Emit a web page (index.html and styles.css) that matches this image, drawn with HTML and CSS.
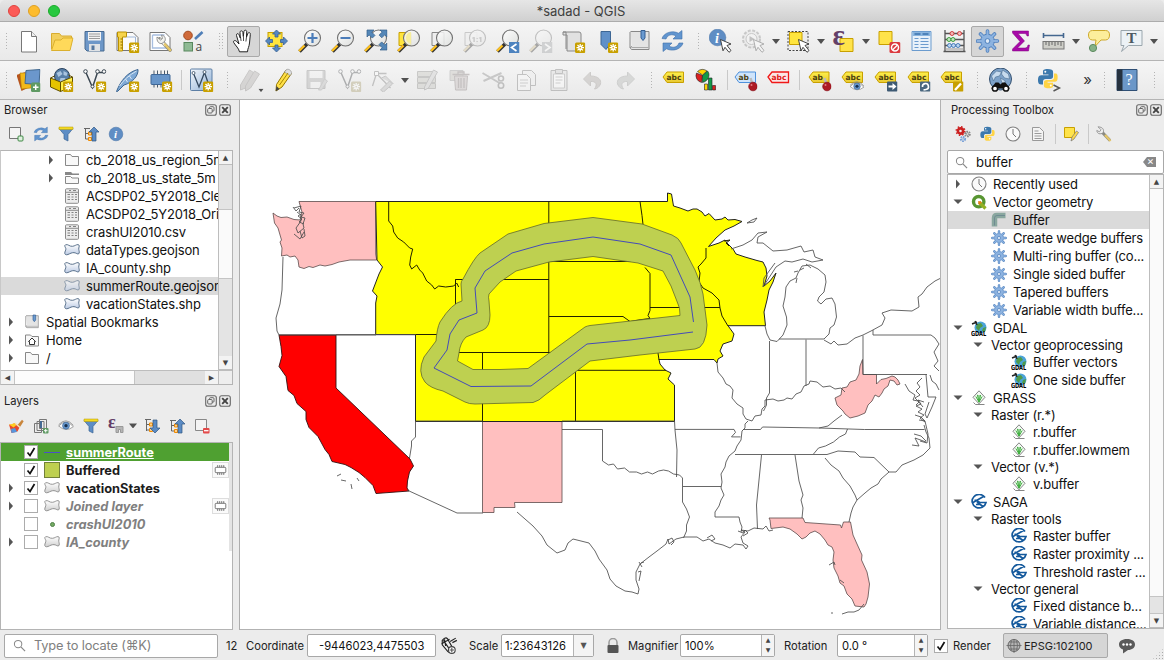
FILE: index.html
```html
<!DOCTYPE html>
<html lang="en">
<head>
<meta charset="utf-8">
<title>*sadad - QGIS</title>
<link rel="stylesheet" href="styles.css">
</head>
<body>
<svg class="defs" width="0" height="0">
<defs>
<linearGradient id="g-lens" x1="0" y1="0" x2="1" y2="1"><stop offset="0" stop-color="#fff"/><stop offset="1" stop-color="#dcdedc"/></linearGradient>
<linearGradient id="g-poly" x1="0" y1="0" x2="0" y2="1"><stop offset="0" stop-color="#fff"/><stop offset="1" stop-color="#bccbe4"/></linearGradient>
<linearGradient id="g-gray" x1="0" y1="0" x2="0" y2="1"><stop offset="0" stop-color="#fff"/><stop offset="1" stop-color="#cfcfcf"/></linearGradient>
<linearGradient id="g-blue" x1="0" y1="0" x2="1" y2="1"><stop offset="0" stop-color="#f4f8fc"/><stop offset="1" stop-color="#8fb0d6"/></linearGradient>
<linearGradient id="g-yel" x1="0" y1="0" x2="0" y2="1"><stop offset="0" stop-color="#fff04a"/><stop offset="1" stop-color="#e8c832"/></linearGradient>
</defs>
</svg>
<svg class="icons" width="0" height="0">
<symbol id="star" viewBox="0 0 24 24"><rect x="13.500" y="13.500" width="10.500" height="10.500" rx="1.500" fill="#c8a000"/><path d="M18.700 15v7.500M15 18.700h7.500M16 16l5.400 5.400M21.400 16L16 21.400" stroke="#fff" stroke-width="1.300"/><circle cx="18.700" cy="18.700" r=".8" fill="#c8a000"/></symbol>
<symbol id="new" viewBox="0 0 24 24"><path d="M5 2.500h10l5 5v15.500H5z" fill="#fff" stroke="#777"/><path d="M15 2.500v5h5" fill="#eee" stroke="#777"/></symbol>
<symbol id="open" viewBox="0 0 24 24"><path d="M2 20V4.500h8l2 2.500h10v4" fill="#f2cf5e" stroke="#d8ac30"/><path d="M2 21.500L5.500 11h6l2-2H23.500L20.500 21.500z" fill="#ffd95a" stroke="#dbb02e"/></symbol>
<symbol id="save" viewBox="0 0 24 24"><path d="M2.500 2.500h19v19.500h-17l-2-2z" fill="#6d97c8" stroke="#486a90"/><path d="M5.500 3h13v8.500h-13z" fill="#f4f4f4"/><path d="M6.500 5h11M6.500 7.300h11M6.500 9.500h11" stroke="#9a9a9a"/><path d="M6.500 15h11v7h-11z" fill="#dfe2e5"/><path d="M9 16.500h3v4.500H9z" fill="#54779f"/></symbol>
<symbol id="layout" viewBox="0 0 24 24"><path d="M1.500 3.500h16l5 5v13h-21z" fill="#fafafa" stroke="#777"/><path d="M2 3h9v5H7v14H3V8H2z" fill="#f6d44b" stroke="#b99000"/><path d="M5 10h2m-2 3h2m-2 3h2m-2 3h2" stroke="#8a6b00"/><path d="M11 8h9v9" fill="none" stroke="#9fb7d8"/><use href="#star"/></symbol>
<symbol id="wrench" viewBox="0 0 24 24"><path d="M1.500 3.500h15l5 5v13h-20z" fill="#fff" stroke="#777"/><path d="M4 6h12M4 6v13h15" fill="none" stroke="#a8bedf" stroke-width="1.300"/><path d="M11 10l10.500 11" stroke="#8a8a80" stroke-width="3.800" stroke-linecap="round"/><path d="M11 10l6 6.500" stroke="#f3f3ef" stroke-width="2.400"/><path d="M16.500 15.500l5 5.500" stroke="#e5c668" stroke-width="2.600" stroke-linecap="round"/><path d="M8.500 8l3.500 3 2-1.500-1-3.500c3 .5 4.500 3 3.500 6l-3 2.500c-3 .5-5.500-2-5-6.500z" fill="#f3f3ef" stroke="#808080" stroke-width=".8"/></symbol>
<symbol id="style" viewBox="0 0 24 24"><circle cx="6.500" cy="6.500" r="4.300" fill="#cf6a3a" stroke="#a34a20"/><path d="M13.500 10L21 3" stroke="#4f7fb8" stroke-width="2.600"/><rect x="2.500" y="13.500" width="8.500" height="8.500" fill="#8fba94" stroke="#59885e"/><text x="14" y="22" class="glyph-a">a</text></symbol>
<symbol id="hand" viewBox="0 0 24 24"><path d="M8 22.800c-1-4-3.500-5.500-5.800-9.300-.9-1.800 1.300-2.600 2.800-1.200L7.500 15 5 6.500c-.5-2 1.800-2.500 2.500-.8L8.800 9l-.3-5.500c0-2.200 2.600-2.200 2.900 0l.4 4 .6-5c.5-2 3-1.500 2.800.4L15 8l1.300-3.500c.9-1.700 2.900-.8 2.500 1L18 14c-.3 4-1.800 5-2 8.800z" fill="#fff" stroke="#222" stroke-width="1"/><path d="M9 8l.6 4M12 7.500v4.500M15 8l-.6 4.500" stroke="#222" stroke-width=".8"/></symbol>
<symbol id="panfull" viewBox="0 0 24 24"><rect x="3.500" y="3.500" width="14" height="14" fill="#ffe53e" stroke="#c8a000"/><path d="M12 1l4 4h-2.500v3h-3V5H8zM12 23l4-4h-2.500v-3h-3v3H8zM1 12l4-4v2.500h3v3H5V16zM23 12l-4-4v2.500h-3v3h3V16z" fill="#5487c4" stroke="#385f90" stroke-width=".8"/></symbol>
<symbol id="lens" viewBox="0 0 24 24"><path d="M2 22.500L9.500 15" stroke="#333" stroke-width="3.500"/><path d="M1.500 22L7 16.500" stroke="#ffc21f" stroke-width="2.300"/><circle cx="15" cy="9" r="8" fill="url(#g-lens)" fill-opacity=".85" stroke="#717171" stroke-width="1.100"/></symbol>
<symbol id="zin" viewBox="0 0 24 24"><use href="#lens"/><path d="M15 4v10M10 9h10" stroke="#4c7db9" stroke-width="2.200"/></symbol>
<symbol id="zout" viewBox="0 0 24 24"><use href="#lens"/><path d="M10 9h10" stroke="#4c7db9" stroke-width="2.200"/></symbol>
<symbol id="zfull" viewBox="0 0 24 24"><use href="#lens"/><path d="M3.500 1h7L8.300 3.200l3.200 3.200-2.700 2.700-3.200-3.200L3.500 8zM23.500 1v7l-2.200-2.200-3 3-2.700-2.700 3-3L16.500 1zM23.500 21h-7l2.200-2.200-3.200-3.200 2.700-2.700 3.200 3.200 2.100-2.100z" fill="#5487b8" stroke="#345f8a" stroke-width=".7"/></symbol>
<symbol id="zsel" viewBox="0 0 24 24"><path d="M2.500 3.500h12v13h-12z" fill="#ffe53e" stroke="#c8a000"/><use href="#lens"/><path d="M14.500 3a6 6 0 0 0-5 6c0 3 2 5 5 6z" fill="#f6ee9c"/></symbol>
<symbol id="zlayer" viewBox="0 0 24 24"><path d="M2.500 3.500h12v13h-12z" fill="#eee" stroke="#888"/><use href="#lens"/></symbol>
<symbol id="znative" viewBox="0 0 24 24"><path d="M2.500 3.500h12v13h-12z" fill="#eee" stroke="#888"/><use href="#lens"/><text x="9" y="12.500" class="glyph-n">1:1</text></symbol>
<symbol id="zprev" viewBox="0 0 24 24"><use href="#lens"/><path d="M13.500 13h10.500v11H13.500z" fill="#4d83bf"/><path d="M21 15l-5 3.500 5 3.500" fill="none" stroke="#fff" stroke-width="1.700"/></symbol>
<symbol id="znext" viewBox="0 0 24 24"><use href="#lens"/><path d="M13.500 13h10.500v11H13.500z" fill="#9ba5ae"/><path d="M16.500 15l5 3.500-5 3.500" fill="none" stroke="#fff" stroke-width="1.700"/></symbol>
<symbol id="newmap" viewBox="0 0 24 24"><path d="M1.500 3h16a2 2 0 0 1 2 2v17H5.500V6h-4z" fill="#e1e1e1" stroke="#888"/><path d="M1.500 3h3v17" fill="none" stroke="#888"/><use href="#star"/></symbol>
<symbol id="bookmark" viewBox="0 0 24 24"><path d="M6.500 2.500h9.500v12l-4.500 6-5-5z" fill="#6090c8" stroke="#3d6694"/><use href="#star"/></symbol>
<symbol id="bookmarks" viewBox="0 0 24 24"><path d="M3 2.500h18.500v18H4.500c-2 0-2-3 0-3M2.500 3v16" fill="#e4e4e4" stroke="#888"/><path d="M4 18.500h17" stroke="#aaa"/><path d="M13.500 1.500h4V9l-2 2.500-2-2.500z" fill="#6a9ad0" stroke="#345f94"/></symbol>
<symbol id="refresh" viewBox="0 0 24 24"><path d="M1.500 9.500A11 9 0 0 1 18 4.200L21.500 1.500v8.500h-9l3-3C11 4.500 7 6 5.500 10z" fill="#6195cf" stroke="#3e6fa9" stroke-width=".6"/><path d="M22.500 14A11 9 0 0 1 6 19.800l-3.500 2.700V14h9l-3 3c4.500 2.500 8.500 1 10-3z" fill="#6195cf" stroke="#3e6fa9" stroke-width=".6"/></symbol>
<symbol id="cursor" viewBox="0 0 24 24"><path d="M12 10.500l10.500 4.500-4 1.500 4 5-2 1.800-4-5-2 3.500z" fill="#fff" stroke="#333" stroke-width=".9"/></symbol>
<symbol id="identify" viewBox="0 0 24 24"><circle cx="9" cy="8.500" r="8.300" fill="#5f8dc4" stroke="#4a76a9" stroke-width=".6"/><text x="6.500" y="13.500" class="glyph-i">i</text><use href="#cursor"/></symbol>
<symbol id="action" viewBox="0 0 24 24"><circle cx="10" cy="10" r="8.500" fill="#e4e4e4" stroke="#888" stroke-width="2" stroke-dasharray="3 1.500"/><circle cx="10" cy="10" r="5.500" fill="#f6f6f6" stroke="#888"/><path d="M8 7l5 3-5 3z" fill="#777"/><use href="#cursor"/></symbol>
<symbol id="select" viewBox="0 0 24 24"><path d="M1.500 2.500h20v19h-20z" fill="#ececec" stroke="#444" stroke-dasharray="2 1.500"/><path d="M3 3.500h12.500v12H3z" fill="#ffe53e" stroke="#c8a000"/><use href="#cursor"/></symbol>
<symbol id="selexpr" viewBox="0 0 24 24"><path d="M8.500 9.500h13v13h-13z" fill="#ffe34a" stroke="#c8a000"/><text x="1" y="16" class="glyph-e">ε</text></symbol>
<symbol id="deselect" viewBox="0 0 24 24"><path d="M2.500 2.500h13v13h-13z" fill="#ffe34a" stroke="#c8a000"/><rect x="13" y="13" width="11" height="11" rx="1.500" fill="#db3a3f"/><circle cx="18.500" cy="18.500" r="3.500" fill="none" stroke="#fff" stroke-width="1.500"/><path d="M16 21l5-5" stroke="#fff" stroke-width="1.300"/></symbol>
<symbol id="table" viewBox="0 0 24 24"><path d="M2.500 2.500h19v19h-19z" fill="#e8f1fa" stroke="#6b9bce"/><path d="M3 3h18v4H3z" fill="#8ab5df"/><path d="M5 5h6M13 5h6" stroke="#3d73ae" stroke-width="1.300"/><path d="M5 9.500h4m2 0h8M5 12.500h4m2 0h8M5 15.500h4m2 0h8M5 18.500h4m2 0h8" stroke="#6b9bce" stroke-width="1.100"/></symbol>
<symbol id="abacus" viewBox="0 0 24 24"><path d="M2.500 1v21.500M21.500 1v21.500M1 22.500h22M2 4.500h20M2 10.500h20M2 16.500h20" stroke="#555" stroke-width="1.300"/><path d="M2 20h20" stroke="#999"/><g stroke-width=".9"><g fill="#f4b8b8" stroke="#c33"><circle cx="9.500" cy="4.500" r="2"/><circle cx="17" cy="4.500" r="2"/></g><g fill="#bfe6bf" stroke="#393"><circle cx="6.500" cy="10.500" r="2"/><circle cx="10.500" cy="10.500" r="2"/></g><g fill="#bcd5f0" stroke="#3b75b5"><circle cx="7" cy="16.500" r="2"/><circle cx="11" cy="16.500" r="2"/><circle cx="15.500" cy="16.500" r="2"/></g></g></symbol>
<symbol id="gear" viewBox="0 0 24 24"><path d="M12 2v20M2 12h20M5 5l14 14M19 5L5 19" stroke="#4d7fbd" stroke-width="3.600" stroke-linecap="round"/><circle cx="12" cy="12" r="6.800" fill="#8db3e0" stroke="#4d7fbd"/><path d="M12 2v20M2 12h20M5 5l14 14M19 5L5 19" stroke="#8db3e0" stroke-width="2" stroke-linecap="round"/><circle cx="12" cy="12" r="2.400" fill="#dce8f6" stroke="#4d7fbd"/></symbol>
<symbol id="sigma" viewBox="0 0 24 24"><path d="M4 2h16v5h-1.500c-.5-2-1.200-2.500-3-2.500H9.500L16 12l-7 7h7.500c1.800 0 2.300-.7 3-3h1.500l-1 6H4v-2l7.500-7.500L4 4z" fill="#a80aa8" stroke="#7d007d" stroke-width=".5"/></symbol>
<symbol id="measure" viewBox="0 0 24 24"><path d="M2 6.500h20M2 4v5M22 4v5" stroke="#44678f" stroke-width="1.600"/><rect x="1.500" y="12.500" width="21" height="7.500" fill="#cfcfc9" stroke="#777"/><path d="M4.500 13v3M7.500 13v4M10.500 13v3M13.500 13v4M16.500 13v3M19.500 13v4" stroke="#666"/></symbol>
<symbol id="tip" viewBox="0 0 24 24"><path d="M6 1.500h13c3 0 4 2 4 4.500s-1 5-4 5h-4.500l-6 6.500 1-6.500H6c-3 0-4-2.500-4-5s1-4.500 4-4.500z" fill="#fcee9b" stroke="#cda92c"/><circle cx="6.500" cy="19" r="3.600" fill="#86b287" stroke="#5d8b60"/></symbol>
<symbol id="annot" viewBox="0 0 24 24"><path d="M1.500 1.500h21v15H9l-7 6 2.500-6h-3z" fill="#ecf2f6" stroke="#9aa6ad"/><text x="7" y="14" class="glyph-t">T</text></symbol>
<symbol id="dsm" viewBox="0 0 24 24"><path d="M0 7l9-3 4 15-8 4z" fill="#b6541d"/><path d="M3.500 5h10l1 15L5 21z" fill="#f3b81a" stroke="#b37d00" stroke-width=".6"/><path d="M9.500 2.500l14-1-1 15-14-1z" fill="#6b97cc" stroke="#41688f"/><rect x="14.500" y="14.500" width="9.500" height="9.500" rx="1.500" fill="#5f9a63"/><path d="M19.200 16.500v5.500M16.500 19.200H22" stroke="#fff" stroke-width="1.500"/></symbol>
<symbol id="gpkg" viewBox="0 0 24 24"><circle cx="12.500" cy="8" r="7.500" fill="#587fa8" stroke="#29425e"/><path d="M7 5l4-2 2 3-4 3zM14 3l4 2-1 3-3-1zM11 10h5l-2 4h-4z" fill="#a9c4df"/><path d="M1 10l10 4v9.500L1 19z" fill="#e6c400" stroke="#604f00"/><path d="M11 14l12-5v9.500l-12 5z" fill="#fff04a" stroke="#604f00"/><path d="M1 10l4-2M23 9l-4-2" stroke="#604f00"/><use href="#star"/></symbol>
<symbol id="shp" viewBox="0 0 24 24"><path d="M3 3.500l7 16 5-15h7" fill="none" stroke="#3b4752" stroke-width="1.500"/><g fill="#fff" stroke="#3b4752"><circle cx="3" cy="3.500" r="1.800"/><circle cx="15" cy="3.500" r="1.800"/><circle cx="21.500" cy="3.500" r="1.800"/><circle cx="10" cy="18.500" r="1.500"/></g><use href="#star"/></symbol>
<symbol id="feather" viewBox="0 0 24 24"><path d="M1 23.500C5 13 12 4 22.500 1.500c.5 6-5 13-14 15.500L2 23.500z" fill="#7ea9d6" stroke="#3c6590"/><path d="M4 18C8 12 14 7 21 3M10 11l2 3m2-6l2 3" stroke="#d7e6f4" fill="none"/><use href="#star"/></symbol>
<symbol id="memory" viewBox="0 0 24 24"><path d="M5.500 2.500v17M9 2.500v17M12.500 2.500v17M16 2.500v17M19 2.500v17" stroke="#4a5a6a"/><rect x="2.500" y="6.500" width="19" height="10" rx="1" fill="#6795c9" stroke="#3f6796"/><use href="#star"/></symbol>
<symbol id="virtual" viewBox="0 0 24 24"><rect x="1" y="1" width="21.500" height="21.500" rx="1" fill="url(#g-blue)" stroke="#5d7fa5"/><path d="M4 5.500L9.500 19 15 4.500 19 16" fill="none" stroke="#354a60" stroke-width="1.300"/><g fill="#fff" stroke="#354a60" stroke-width=".8"><circle cx="4" cy="5" r="1.500"/><circle cx="15" cy="4" r="1.500"/></g><use href="#star"/></symbol>
<symbol id="pencil" viewBox="0 0 24 24"><path d="M5 16.500L14.500 2l5.500 3.500L10.500 19 4.500 23z" fill="#ffe047" stroke="#937500"/><path d="M14.500 2c2-2 6 .5 5.500 3.500l-1.300 2L13 4z" fill="#ddd" stroke="#999" stroke-width=".7"/><path d="M8 17L16.500 5" stroke="#a98900"/><path d="M5 18l-.8 5.300L8 21z" fill="#444"/></symbol>
<symbol id="edits" viewBox="0 0 24 24"><g fill="#b5aba5" stroke="#8e857f"><path d="M2 17L11 2l4 2.500L7 20l-5 2z"/><path d="M7 18L16 3l5 3L12 20l-5 3z"/></g></symbol>
<symbol id="saveedit" viewBox="0 0 24 24"><path d="M2.500 2.500h18v18h-18z" fill="#aaa" stroke="#888"/><path d="M5 3h13v7H5zM6 14h10v6H6z" fill="#f2f2f2"/><path d="M14 22l6-11 3 2-6 9z" fill="#bbb" stroke="#999"/></symbol>
<symbol id="vertex" viewBox="0 0 24 24"><path d="M2 18L6 5.500h10M6 5.500L20 20" fill="none" stroke="#777" stroke-width="1.300"/><path d="M4 3.500h4v4H4z" fill="#fff" stroke="#777"/><path d="M10 22l9-9 3 3-9 8zM11 10l4-2 8 8" fill="#bbb" stroke="#888"/></symbol>
<symbol id="multi" viewBox="0 0 24 24"><path d="M2 3.500h18v5H2zM2 9.500h18v5H2zM2 15.500h18v5H2z" fill="#c4c4ae" stroke="#8a8a7c"/><path d="M9 19L18 2l4 2-9 16-4 2z" fill="#ccc" stroke="#888"/></symbol>
<symbol id="trash" viewBox="0 0 24 24"><path d="M1.500 2.500h13v10h-13z" fill="#c8c0a8" stroke="#999"/><path d="M6 8h13l-1 14H7z" fill="#d2b5b5" stroke="#947575"/><path d="M4 6.500h17M9.500 6V4h6v2M10 10v10M12.500 10v10M15.500 10v10" stroke="#947575" stroke-width="1.300" fill="none"/></symbol>
<symbol id="cut" viewBox="0 0 24 24"><path d="M1 5l17 10M2 13L20 5" stroke="#888" stroke-width="2"/><g fill="none" stroke="#777" stroke-width="1.600"><circle cx="19.500" cy="10.500" r="2.500"/><circle cx="19.500" cy="17.500" r="2.700"/></g></symbol>
<symbol id="copy" viewBox="0 0 24 24"><path d="M8 2.500h9l4 4v11H8z" fill="#eee" stroke="#777"/><path d="M3 6.500h9l4 4v12H3z" fill="#f8f8f8" stroke="#777"/><path d="M5.500 12h8M5.500 15h8M5.500 18h6" stroke="#999"/></symbol>
<symbol id="paste" viewBox="0 0 24 24"><path d="M3.500 2.500h16v20h-16z" fill="#ddd" stroke="#777"/><path d="M6 6h11v14H6z" fill="#fff" stroke="#999"/><path d="M8 1.500h7v4H8z" fill="#ccc" stroke="#777"/><path d="M8 9h7M8 12h7M8 15h5" stroke="#999"/></symbol>
<symbol id="undo" viewBox="0 0 24 24"><path d="M3 11l7-7v4c8 0 11 4 10 8-1 3-4 5-6 5 3-4 2-8-4-7.500v4.500z" fill="#b6a798" stroke="#9e8f82"/></symbol>
<symbol id="redo" viewBox="0 0 24 24"><path d="M21 11l-7-7v4C6 8 3 12 4 16c1 3 4 5 6 5-3-4-2-8 4-7.500v4.500z" fill="#aeb4ae" stroke="#959b95"/></symbol>
<symbol id="lab" viewBox="0 0 24 24"><path d="M1.500 9L5.500 4H22v10.500H5.500z" fill="url(#g-yel)" stroke="#c8a000"/><text x="5" y="12.300" class="glyph-l">abc</text></symbol>
<symbol id="diagram" viewBox="0 0 24 24"><path d="M8 7.500L2 5a7 7 0 0 0 5 9.500z" fill="#dc2020" stroke="#222" stroke-width=".6"/><path d="M8 7L3 3.500a7 7 0 0 1 9.500-.5z" fill="#ffd400" stroke="#222" stroke-width=".6"/><path d="M8 7.500l5-4.500c3 3 1.500 10-5 11.500z" fill="#129a48" stroke="#222" stroke-width=".6"/><path d="M10 16h3v6h-3z" fill="#ffd400" stroke="#222" stroke-width=".6"/><path d="M14 10h3.500v12H14z" fill="#129a48" stroke="#222" stroke-width=".6"/><path d="M18 17.500h3V22h-3z" fill="#dc2020" stroke="#222" stroke-width=".6"/></symbol>
<symbol id="labpin" viewBox="0 0 24 24"><path d="M1.500 9L5.500 4H22v10.500H5.500z" fill="#cfe4fb" stroke="#4e91dc"/><text x="5" y="12.300" class="glyph-l">ab</text><use href="#pin"/></symbol>
<symbol id="pin" viewBox="0 0 24 24"><path d="M17 10l2.500 8" stroke="#bbb" stroke-width="2.500"/><circle cx="19.500" cy="18.500" r="4.300" fill="#ad1a24" stroke="#8a0f18" stroke-width=".7"/><circle cx="18" cy="17" r="1" fill="#e37a80"/></symbol>
<symbol id="labred" viewBox="0 0 24 24"><path d="M1.500 9L5.500 4H22v10.500H5.500z" fill="#fbe6e6" stroke="#f01818" stroke-width="1.300"/><text x="5" y="12.300" class="glyph-l red">abc</text></symbol>
<symbol id="lab1" viewBox="0 0 24 24"><path d="M1.500 9L5.500 4H21.500v10.500H5.500z" fill="url(#g-yel)" stroke="#c8a000"/><text x="5" y="12.300" class="glyph-l">ab</text><use href="#pin"/></symbol>
<symbol id="eye" viewBox="0 0 24 24"><path d="M1 12q11-12 22 1-11 9-22-1z" fill="#fff" stroke="#777"/><circle cx="12" cy="11.500" r="5.200" fill="#6a9ad0" stroke="#3c6796"/><circle cx="12" cy="11.500" r="2.500" fill="#17304e"/><path d="M1 10Q12-2 23 11" fill="none" stroke="#8a8a8a" stroke-width="1.200"/></symbol>
<symbol id="lab2" viewBox="0 0 24 24"><use href="#lab"/><use href="#eye" x="9" y="11" width="15" height="15"/></symbol>
<symbol id="lab3" viewBox="0 0 24 24"><use href="#lab"/><rect x="13.500" y="13.500" width="10.500" height="10" rx="1" fill="#3e5a74"/><path d="M15 17.500h4V15l4 3.500-4 3.500v-2.500h-4z" fill="#fff"/></symbol>
<symbol id="lab4" viewBox="0 0 24 24"><use href="#lab"/><rect x="13.500" y="13.500" width="10.500" height="10" rx="1" fill="#4a677f"/><path d="M16 19a3 3 0 1 1 3.500 2.500L17 22" fill="none" stroke="#fff" stroke-width="1.600"/></symbol>
<symbol id="lab5" viewBox="0 0 24 24"><use href="#lab"/><rect x="13.500" y="13.500" width="10.500" height="10" rx="1" fill="#c8a000"/><path d="M15.500 22l6-6.500" stroke="#fff" stroke-width="2.300"/></symbol>
<symbol id="osm" viewBox="0 0 24 24"><circle cx="12" cy="11" r="11" fill="#7da2c9" stroke="#34506f"/><path d="M3 8l5-5 5 1-2 4-4 1-2 4zM14 2l6 4 1 5-5-1-3-4zM12 10l5 3-3 4z" fill="#c7dbee" stroke="#4a6b8d" stroke-width=".6"/><path d="M2.500 20.500L7 14.500h3l2 2 2-2h3l4.500 6" fill="#111"/><g fill="#fff" stroke="#111" stroke-width="1.500"><circle cx="6.500" cy="20.500" r="2.600"/><circle cx="17.500" cy="20.500" r="2.600"/></g></symbol>
<symbol id="py" viewBox="0 0 24 24"><path d="M11 1c-4 0-5 1-5 3v3h6v1H4c-2 0-3.500 1.500-3.500 5s1 5 3.500 5h2v-3c0-2 1-3 3-3h5c2 0 3-1 3-3V4c0-2-2-3-6-3z" fill="#3c79ad"/><path d="M12 22c4 0 5-1 5-3v-3h-6v-1h8c2 0 3-1.500 3-5s-1-4-3-4h-1v4c0 2-1 3-3 3h-5c-2 0-3 1-3 3v3c0 2 1 3 5 3z" fill="#ffd445"/><circle cx="8.500" cy="4" r="1.100" fill="#fff"/><circle cx="14.500" cy="19" r="1.100" fill="#fff"/></symbol>
<symbol id="pyc" viewBox="0 0 24 24"><use href="#py" width="22" height="22"/><path d="M16 17l6 3-6 3" fill="none" stroke="#555" stroke-width="1.400"/></symbol>
<symbol id="help" viewBox="0 0 24 24"><path d="M2.500 1.500h20v21h-20z" fill="#6b97c8" stroke="#2f4f75"/><path d="M2.500 1.500H8v21H2.500z" fill="#26323f"/><text x="11" y="17" class="glyph-q">?</text></symbol>
<symbol id="expand" viewBox="0 0 16 16"><path d="M6 3.500v9l4-4.500z" fill="#555"/></symbol>
<symbol id="open-tri" viewBox="0 0 16 16"><path d="M3.500 5.500h9L8 10z" fill="#555"/></symbol>
<symbol id="folder" viewBox="0 0 16 16"><path d="M1.500 13.500v-11h5l1.500 2h6.500v9z" fill="#f8f8f8" stroke="#888"/></symbol>
<symbol id="folderopen" viewBox="0 0 16 16"><path d="M1 2h6l1.500 1.500H15V5H1z" fill="#888"/><path d="M1.500 13.500v-7h5L8 8h6.500v5.500z" fill="#f8f8f8" stroke="#888"/></symbol>
<symbol id="csv" viewBox="0 0 16 16"><rect x="1.500" y=".8" width="13" height="14.500" rx="1" fill="#ececec" stroke="#8c8c8c"/><path d="M2 4.300h12" stroke="#8c8c8c"/><path d="M3.500 6.500h2.500m1.500 0h2m1.500 0h2M3.500 9h2.500m1.500 0h2m1.500 0h2M3.500 11.500h2.500m1.500 0h2m1.500 0h2M5 2.500h2m2 0h3" stroke="#777" stroke-width=".9"/></symbol>
<symbol id="poly" viewBox="0 0 16 16"><path d="M1.500 2.800C4 1.800 5.500 4.700 8.500 4.300 11 4 12 2.600 14 2.600c1.800.2 1.200 2 .8 3.400-.3 1.700.8 3.500.4 5-.5 1.700-2 .8-3.700 0-2-.8-4-.2-6 .8-2 1.200-4.300 1.500-4.700-.3C.5 9.500 2.200 8.300 1.800 6.500 1.300 5 0 3.500 1.500 2.800z" fill="url(#g-poly)" stroke="#4a6380" stroke-width=".9"/></symbol>
<symbol id="polyg" viewBox="0 0 16 16"><path d="M1.500 2.800C4 1.800 5.500 4.700 8.500 4.300 11 4 12 2.600 14 2.600c1.800.2 1.200 2 .8 3.400-.3 1.700.8 3.500.4 5-.5 1.700-2 .8-3.700 0-2-.8-4-.2-6 .8-2 1.200-4.300 1.500-4.700-.3C.5 9.500 2.200 8.300 1.800 6.500 1.300 5 0 3.500 1.500 2.800z" fill="url(#g-gray)" stroke="#888" stroke-width=".9"/></symbol>
<symbol id="home" viewBox="0 0 16 16"><path d="M1.500 14v-11h5l1.500 1.500h6.500V14z" fill="#f8f8f8" stroke="#888"/><path d="M4.500 9.500L8 6l3.500 3.500H10.500v3h-5v-3z" fill="#fff" stroke="#333"/></symbol>
<symbol id="float" viewBox="0 0 12 12"><rect x=".7" y=".7" width="10.600" height="10.600" rx="2" fill="none" stroke="#666" stroke-width="1.100"/><rect x="4.500" y="2.700" width="4.500" height="4.500" rx="1" fill="none" stroke="#666"/><rect x="2.700" y="4.500" width="4.500" height="4.500" rx="1" fill="#ececec" stroke="#666"/></symbol>
<symbol id="close" viewBox="0 0 12 12"><rect x=".7" y=".7" width="10.600" height="10.600" rx="2" fill="none" stroke="#666" stroke-width="1.100"/><path d="M3.200 3.200l5.600 5.600M8.800 3.200L3.200 8.800" stroke="#444" stroke-width="1.900"/></symbol>
<symbol id="addlayer" viewBox="0 0 16 16"><path d="M1.500 1.500h11v11h-11z" fill="#f4f4f4" stroke="#777"/><rect x="10" y="10" width="5" height="5" rx="1" fill="#dff0df" stroke="#3f8a45"/></symbol>
<symbol id="remlayer" viewBox="0 0 16 16"><path d="M1.500 1.500h11v11h-11z" fill="#f4f4f4" stroke="#888"/><rect x="9" y="10" width="6.500" height="5.500" rx="1" fill="#e34a4a"/><path d="M10 12.700h4.500" stroke="#fff" stroke-width="1.300"/></symbol>
<symbol id="funnel" viewBox="0 0 16 16"><path d="M1 2.500h14l-5 6V15l-4-2V8.500z" fill="#5d8dc5" stroke="#3d6797" stroke-width=".7"/><path d="M1 1h14v2.500H1z" fill="#f4d922" stroke="#b49a00" stroke-width=".5"/></symbol>
<symbol id="collapse" viewBox="0 0 16 16"><path d="M1 2.500h6M2.500 3v10M2.500 7.500h3M2.500 13h3" stroke="#666"/><path d="M5.500 6h3v3h-3zM5.500 11.500h3v3h-3z" fill="#ffd08a" stroke="#f08a00"/><path d="M11 1l5 5h-3v9H9V6H6z" fill="#5b8bc4" stroke="#2f5683" stroke-width=".7"/></symbol>
<symbol id="expandall" viewBox="0 0 16 16"><path d="M1 1.500h6M2.500 2v11M2.500 6.500h3M2.500 12h3" stroke="#666"/><path d="M5.500 5h3v3h-3zM5.500 10.500h3v3h-3z" fill="#ffd08a" stroke="#f08a00"/><path d="M11 15l5-5h-3V2H9v8H6z" fill="#5b8bc4" stroke="#2f5683" stroke-width=".7"/></symbol>
<symbol id="info" viewBox="0 0 16 16"><circle cx="8" cy="8" r="6.800" fill="#5f8dc4" stroke="#4a76a9" stroke-width=".6"/><text x="6" y="12" class="glyph-s">i</text></symbol>
<symbol id="brush" viewBox="0 0 16 16"><path d="M9.500 7L14 1.800l1.700 1.400L12 9z" fill="#c9863c"/><path d="M1 6.500l2.500.5 3-2 5 4.500-2 4-6 1.500z" fill="#e8492c"/><path d="M1 6.500l3-.5 2.500-1 2 2-3 2.500z" fill="#ffcc20"/><path d="M3 11l4-1 2 4-5.500 1z" fill="#5696dc"/><path d="M7 5l5 4.500" stroke="#f3ddb5" stroke-width="1.500"/></symbol>
<symbol id="group" viewBox="0 0 16 16"><path d="M1.500 5.500h7v9h-7zM4 3.500h7v9H4zM6.500 1.500h7v9h-7z" fill="#eee" stroke="#777"/><path d="M8 3v7" stroke="#456a94" stroke-width="2"/><rect x="10" y="10" width="5.500" height="5.500" rx="1" fill="#5f9a63"/><path d="M12.700 11v3.500M11 12.700h3.500" stroke="#fff"/></symbol>
<symbol id="epsf" viewBox="0 0 16 16"><text x="0" y="9.500" class="glyph-es">ε</text><path d="M8 8.500h7v6h-2.500v-3h-2v3H8z" fill="#b5b5b5" stroke="#999"/></symbol>
<symbol id="chip" viewBox="0 0 16 14"><path d="M4.500 1v12M7 1v12M9.500 1v12M12 1v12" stroke="#666" stroke-width="1.100"/><rect x="1.500" y="3.700" width="13" height="6.600" rx="1" fill="#fff" stroke="#777" stroke-width="1.200"/></symbol>
<symbol id="check" viewBox="0 0 12 12"><path d="M2.500 6.500L5 9.500l4.500-7.500" fill="none" stroke="#111" stroke-width="1.700"/></symbol>
<symbol id="mag" viewBox="0 0 14 14"><circle cx="5.500" cy="5.500" r="4" fill="none" stroke="#888" stroke-width="1.100"/><path d="M8.500 8.500l4.500 4.500" stroke="#888" stroke-width="1.300"/></symbol>
<symbol id="clock" viewBox="0 0 16 16"><circle cx="8" cy="8" r="7" fill="#fafafa" stroke="#808080" stroke-width="1.100"/><path d="M8 3v5l3 3" fill="none" stroke="#777"/></symbol>
<symbol id="q" viewBox="0 0 16 16"><circle cx="7.700" cy="7.700" r="5.200" fill="none" stroke="#589632" stroke-width="3.400"/><path d="M8 8l6.500 6.500" stroke="#93b023" stroke-width="3.200"/><path d="M7 7l4 1-3 3z" fill="#ee7913"/></symbol>
<symbol id="buf" viewBox="0 0 16 16"><path d="M3.500 14.500V6q0-2.500 2.500-2.500h8.500" fill="none" stroke="#8aa79f" stroke-width="5.500"/><path d="M3.500 13.500V6q0-2.500 2.500-2.500h8" fill="none" stroke="#6f8c92" stroke-width="1"/></symbol>
<symbol id="gdal" viewBox="0 0 16 16"><circle cx="9.500" cy="7.500" r="6" fill="#4ba3d8"/><path d="M6 4l4-1 2 3-3 2-1 3-3-3zM12 8l3-1-1 5-3-1z" fill="#4f9a4a"/><path d="M1 4l5-2M4 1l2 4" stroke="#222" stroke-width="1.400"/><text x="0" y="15.500" class="glyph-g" textLength="15" lengthAdjust="spacingAndGlyphs">GDAL</text></symbol>
<symbol id="grass" viewBox="0 0 16 16"><path d="M8 .8l6 6.500-6 6.500-6-6.500z" fill="#f4faf4" stroke="#777" stroke-width=".9"/><path d="M8 12.500V5M8 12L4.800 6.500M8 12l3.200-5.500M8 12L6.400 4.800M8 12l1.600-7" stroke="#3fae3f"/><path d="M2.500 12.500l2 2h9" stroke="#777" fill="none" stroke-width=".9"/></symbol>
<symbol id="saga" viewBox="0 0 16 16"><path d="M14 3.500A7 6.700 0 1 0 15 8.500H8M2 8.500l10.500-6M6 8l6.500 5M5 10.500h4M3.500 6L8.500 8" fill="none" stroke="#14599c" stroke-width="1.700"/></symbol>
<symbol id="gears" viewBox="0 0 16 16"><g fill="none" stroke-width="2.600"><circle cx="5.500" cy="5" r="2.600" stroke="#cc2020" stroke-width="2.600"/><circle cx="5.500" cy="5" r="4.300" stroke="#cc2020" stroke-width="1.500" stroke-dasharray="1.500 1.880"/><circle cx="12.500" cy="8" r="2" stroke="#888" stroke-dasharray="1.300 .6"/><circle cx="8" cy="13" r="1.800" stroke="#7ba3d8" stroke-dasharray="1.300 .6"/></g></symbol>
<symbol id="doc" viewBox="0 0 16 16"><path d="M2.500 1.500h7l4 4v9h-11z" fill="#f4f4f4" stroke="#999"/><path d="M4.500 5h4m-4 2.500h7m-7 2.500h7m-7 2.500h7" stroke="#999"/></symbol>
<symbol id="sqedit" viewBox="0 0 16 16"><path d="M1.500 1.500h10v10h-10z" fill="#ffe34a" stroke="#c8a000"/><path d="M8 15l1-4 4.500-6 2 1.500L11 13z" fill="#ffd94a" stroke="#777" stroke-width=".7"/></symbol>
<symbol id="spanner" viewBox="0 0 16 16"><path d="M5 5l9 9.500" stroke="#8a8a80" stroke-width="3"/><path d="M9 9l5.500 6" stroke="#e5c668" stroke-width="2.200"/><path d="M2 .8l3 3-1.500 2L.8 4.500C1 8 4.500 8.500 7 7 8.500 4 7 1 2 .8z" fill="#eee" stroke="#888" stroke-width=".8"/></symbol>
<symbol id="mouse" viewBox="0 0 16 16"><path d="M2 3q4-5 6 1l4 7q-2 4-5 2L2 7z" fill="#eee" stroke="#222"/><path d="M3 3l7 10M1.500 6l7-4M9 4l5-3M11 5l4-2M4 2l1 6" stroke="#222"/><circle cx="10.500" cy="11.500" r="3" fill="#fff" stroke="#444"/><path d="M10.500 9.500v4M8.500 11.500h4" stroke="#555"/></symbol>
<symbol id="lock" viewBox="0 0 16 16"><path d="M4 8V4.500a4 4 0 0 1 8 0V8" fill="none" stroke="#999" stroke-width="1.500"/><rect x="2.500" y="7" width="11" height="8" rx="1" fill="#555"/></symbol>
<symbol id="crs" viewBox="0 0 16 16"><circle cx="8" cy="7.500" r="6" fill="#b4b4b4" stroke="#666"/><path d="M.5 7.500h15M8 1v14M3.500 4h9M3.500 11h9M5.500 2.500q-2 5 0 10M10.500 2.500q2 5 0 10" fill="none" stroke="#666" stroke-width=".8"/></symbol>
<symbol id="chat" viewBox="0 0 18 16"><path d="M9 1c5 0 8 2.300 8 5.500S14 12 10 12l-5 3.500V11.500C2.500 10.500 1 9 1 6.500 1 3.300 4 1 9 1z" fill="#5a5a5a"/><circle cx="5.500" cy="6.500" r="1.200" fill="#fff"/><circle cx="9" cy="6.500" r="1.200" fill="#fff"/><circle cx="12.500" cy="6.500" r="1.200" fill="#fff"/></symbol>
</svg>

<header class="titlebar"><div class="lights"><i class="light red-l"></i><i class="light yellow-l"></i><i class="light green-l"></i></div><h1>*sadad - QGIS</h1></header>

<nav class="toolbar">
<i class="handle first"></i>
<svg class="tool"><use href="#new"/></svg><svg class="tool"><use href="#open"/></svg><svg class="tool"><use href="#save"/></svg><svg class="tool"><use href="#layout"/></svg><svg class="tool"><use href="#wrench"/></svg><svg class="tool"><use href="#style"/></svg>
<i class="handle wide"></i>
<span class="pressed"><svg class="tool"><use href="#hand"/></svg></span><svg class="tool"><use href="#panfull"/></svg><svg class="tool"><use href="#zin"/></svg><svg class="tool"><use href="#zout"/></svg><svg class="tool"><use href="#zfull"/></svg><svg class="tool"><use href="#zsel"/></svg><svg class="tool"><use href="#zlayer"/></svg><svg class="tool off"><use href="#znative"/></svg><svg class="tool"><use href="#zprev"/></svg><svg class="tool off"><use href="#znext"/></svg><svg class="tool"><use href="#newmap"/></svg><svg class="tool"><use href="#bookmark"/></svg><svg class="tool"><use href="#bookmarks"/></svg><svg class="tool"><use href="#refresh"/></svg>
<i class="handle narrow"></i>
<svg class="tool"><use href="#identify"/></svg><svg class="tool off"><use href="#action"/></svg><i class="drop"></i><svg class="tool"><use href="#select"/></svg><i class="drop"></i><svg class="tool"><use href="#selexpr"/></svg><i class="drop"></i><svg class="tool"><use href="#deselect"/></svg><svg class="tool"><use href="#table"/></svg><svg class="tool"><use href="#abacus"/></svg><span class="pressed"><svg class="tool"><use href="#gear"/></svg></span><svg class="tool"><use href="#sigma"/></svg><svg class="tool"><use href="#measure"/></svg><i class="drop"></i><svg class="tool"><use href="#tip"/></svg><svg class="tool"><use href="#annot"/></svg><i class="drop"></i>
</nav>
<nav class="toolbar">
<i class="handle first"></i>
<svg class="tool"><use href="#dsm"/></svg><svg class="tool"><use href="#gpkg"/></svg><svg class="tool"><use href="#shp"/></svg><svg class="tool"><use href="#feather"/></svg><svg class="tool"><use href="#memory"/></svg><i class="sep"></i><svg class="tool"><use href="#virtual"/></svg>
<i class="handle"></i>
<span class="cell"><svg class="tool off"><use href="#edits"/></svg><i class="drop corner"></i></span><svg class="tool"><use href="#pencil"/></svg><svg class="tool off"><use href="#saveedit"/></svg><svg class="tool off"><use href="#shp"/></svg><svg class="tool off"><use href="#vertex"/></svg><i class="drop"></i><svg class="tool off"><use href="#multi"/></svg><svg class="tool off"><use href="#trash"/></svg><svg class="tool off"><use href="#cut"/></svg><svg class="tool off"><use href="#copy"/></svg><svg class="tool off"><use href="#paste"/></svg><svg class="tool off"><use href="#undo"/></svg><svg class="tool off"><use href="#redo"/></svg>
<i class="handle narrow"></i>
<svg class="tool"><use href="#lab"/></svg><svg class="tool"><use href="#diagram"/></svg><i class="sep thin"></i><svg class="tool"><use href="#labpin"/></svg><svg class="tool"><use href="#labred"/></svg><i class="sep"></i><svg class="tool"><use href="#lab1"/></svg><svg class="tool"><use href="#lab2"/></svg><svg class="tool"><use href="#lab3"/></svg><svg class="tool"><use href="#lab4"/></svg><svg class="tool"><use href="#lab5"/></svg>
<i class="handle"></i><svg class="tool"><use href="#osm"/></svg><i class="handle"></i><svg class="tool"><use href="#pyc"/></svg><span class="more">»</span><i class="handle narrow"></i><svg class="tool"><use href="#help"/></svg><i class="handle last"></i>
</nav>

<main class="main">
<aside class="left">
<section class="dock browser">
<header class="dock-title"><h2>Browser</h2><svg><use href="#float"/></svg><svg><use href="#close"/></svg></header>
<div class="dock-tools"><svg><use href="#addlayer"/></svg><svg><use href="#refresh"/></svg><svg><use href="#funnel"/></svg><svg><use href="#collapse"/></svg><svg><use href="#info"/></svg></div>
<div class="browser-view">
<ul class="tree">
<li class="deep"><svg class="arrow"><use href="#expand"/></svg><svg class="ico"><use href="#folder"/></svg>cb_2018_us_region_5m</li>
<li class="deep"><svg class="arrow"><use href="#expand"/></svg><svg class="ico"><use href="#folderopen"/></svg>cb_2018_us_state_5m</li>
<li class="deep"><i class="arrow"></i><svg class="ico"><use href="#csv"/></svg>ACSDP02_5Y2018_Clean</li>
<li class="deep"><i class="arrow"></i><svg class="ico"><use href="#csv"/></svg>ACSDP02_5Y2018_Original</li>
<li class="deep"><i class="arrow"></i><svg class="ico"><use href="#csv"/></svg>crashUI2010.csv</li>
<li class="deep"><i class="arrow"></i><svg class="ico"><use href="#poly"/></svg>dataTypes.geojson</li>
<li class="deep"><i class="arrow"></i><svg class="ico"><use href="#poly"/></svg>IA_county.shp</li>
<li class="deep picked"><i class="arrow"></i><svg class="ico tint"><use href="#poly"/></svg>summerRoute.geojson</li>
<li class="deep"><i class="arrow"></i><svg class="ico"><use href="#poly"/></svg>vacationStates.shp</li>
<li><svg class="arrow"><use href="#expand"/></svg><svg class="ico"><use href="#bookmarks"/></svg>Spatial Bookmarks</li>
<li><svg class="arrow"><use href="#expand"/></svg><svg class="ico"><use href="#home"/></svg>Home</li>
<li><svg class="arrow"><use href="#expand"/></svg><svg class="ico"><use href="#folder"/></svg>/</li>
<li><i class="arrow"></i><svg class="ico"><use href="#folderopen"/></svg></li>
</ul>
<div class="vbar"><b>▲</b><i class="v-thumb"></i><b>▼</b></div>
<div class="hbar"><b>◀</b><i class="h-thumb"></i><b>▶</b></div>
<div class="bar-corner"></div>
</div>
</section>
<section class="dock layers">
<header class="dock-title"><h2>Layers</h2><svg><use href="#float"/></svg><svg><use href="#close"/></svg></header>
<div class="dock-tools"><svg><use href="#brush"/></svg><svg><use href="#group"/></svg><svg><use href="#eye"/></svg><svg><use href="#funnel"/></svg><svg><use href="#epsf"/></svg><i class="drop"></i><svg><use href="#expandall"/></svg><svg><use href="#collapse"/></svg><svg><use href="#remlayer"/></svg></div>
<ul class="layer-list">
<li class="active"><i class="arrow"></i><span class="box"><svg><use href="#check"/></svg></span><i class="sym"><i class="line-sym"></i></i><span class="name">summerRoute</span></li>
<li><i class="arrow"></i><span class="box"><svg><use href="#check"/></svg></span><i class="sym fill-sym"></i><span class="name">Buffered</span><svg class="chip"><use href="#chip"/></svg></li>
<li><svg class="arrow"><use href="#expand"/></svg><span class="box"><svg><use href="#check"/></svg></span><svg class="sym"><use href="#polyg"/></svg><span class="name">vacationStates</span></li>
<li class="hidden-layer"><svg class="arrow"><use href="#expand"/></svg><span class="box"></span><svg class="sym"><use href="#polyg"/></svg><span class="name">Joined layer</span><svg class="chip"><use href="#chip"/></svg></li>
<li class="hidden-layer"><i class="arrow"></i><span class="box"></span><i class="sym"><i class="dot-sym"></i></i><span class="name">crashUI2010</span></li>
<li class="hidden-layer"><svg class="arrow"><use href="#expand"/></svg><span class="box"></span><svg class="sym"><use href="#polyg"/></svg><span class="name">IA_county</span></li>
</ul>
</section>
</aside>

<svg class="map" viewBox="240 100 700 529">
<g class="pink">
<path d="M299 201.500H375.700V254l1 6H350L339 262 332 264.500 325 266 320 265 313 267.500 309 266.500 304 268.500 299 267 298 260 295 256 290 257 287 255 281.500 256 282 248 280 242 281.500 240 278 228 274.500 223 273 213 277 216 281 217.500 287 217 294 219.500 300 220 302 212z"/>
<path d="M482.500 421H562V502.500H514.500l.5 5H494V512.500H482.500z"/>
<path d="M862.500 359.500L863 374.500H876.500V384L881 379.500 886 378.500 892 376 895 377 898 380 900 384 897 385 894 381 890 380 888 386 884 389 882 393 879 397 875 395 872 401 868 405 865 413 858 416 850 418 845 414 843 411 837 405 835 398 841 395 842 388 847 387 850 382 856 380 859 374 860 366z"/>
<path d="M769 518h34l2 4.500L840.500 525l1 3 2-6H850.500L853 535 857 544 862 555 861.500 560 867 572 869.500 584 868 597 866 604 864 607 855 606 852 599 847 594 844 586 840 583 838 576 834 568 833 560 834 552 832 547 828 545 825 540 820 534 815 531 810 533 806 537 802 539 797 534 790 529 783 527 771 528.500 770 520z"/>
</g>
<path class="red-state" d="M279 335h57v53l74 71 3.500 7-4 6-2 9-.5 7 2 3-33 2.500-3-8-8-8-6-5-8-5-6-3-13-3-3-7-4-5-7-13-9-9-3-8v-8l-9-8-3-8-6-5-2-14-7-10 3-11-1-9z"/>
<path class="yellow-state" d="M375.700 201.500H667.500V193L671.500 194 673.500 206 680 208 688 211 693 209 697 209 702 212 705 216 709 213.500 715 220 722 219 725 217 728 220 735 219.500 742 221.500 734 226 725 230 716 238 708.500 246.500 719 243 725 240 727 243 733 249 736 254 745 257 757 260.500 763 262 766 268 767 276 764 286 770 281 776 273 773 282 769 290 767 300 764 312 765.500 325.700H728L734 334 732 341 723 344 720 351 723 356 718 359 717 363 714 359.500H659L660 364 665 370 671 373 668 379 674.500 385V421.500H415.500V334.600H375.700V303L377 296 372.500 291 379 274 382.500 267 377 260z"/>
<path class="lines dark" d="M388.700 201.500V221l4 5 1 6 4 6 6 4 6 6 3 1-2 8-1 8 2 4 5-4 3 5 3 3 4 8 5 4 3 4 4-3 7 1 8-1 3-3 2 4M548.800 201.500v22M548.800 262v90M455.500 352V279.500h93.500M455.500 279.500v55h-40M457 352.500h118.500V421M482.500 352.500V421M549 261.500h96M549 316.500h74l7 5 12-2 8-1-2-3 2-5v-37l-5-6M640 201.500l2 14 1 9M650 307.500h70M576 370.300h90M706 248v10l-5 6-3 3 2 6-1 9 4 6 9 5 7 7 1 8 2 8 6 10M658 353l1 7M724 241l6-1-4 3 3 3"/>
<path class="lines" d="M283 257l-1 33-2 14-4 14 1 13 2 4H376M336 334.600h79.500M415.500 421V437l-4 4v5l-2 12M415.500 421h67M407 490l50 23h26M562 421h113M562 429.500h40.500V461l6 4 5-1 4 5 7-1 5 4 7 0 5 2 6-2 5 2 6-3 5-1 5 1 5 3 6 1 3 3M674.500 421l.5 9 2 20-.5 27M675 429.400h59l1.500 3-4 4.500h9M748 421l-3 3v4l-3 3-1 9-4 6-2 5-6 5-3 6-1 5-4 7 1 8-1 6 3 7-3 5-2 6-4 6v5h24l1 5 2 5-1 5M683 486.500h38M682.500 478v24l4 7 3 8-3 8v6l-3 7M684 537l-8 2-7 5-1-5-2 5-9 7-8 6-9 7-4 8 0 8 3 9-1 5-6-2-7-1-9-5-6-7-3-9-8-11-4-8-6-8-8-2-8-2-5 4-3 7-8 3-10-8-5-9-9-10-16-14M684 537l13 0 6 4 6-2 6 4 8 2 7 3 5-4 8 1 3 4 2-3-5-3-2-6 4-5-4-2 7 1 6-3 9 1 3-3 3 5 4-1M761.500 455l-2 20-3 30 1 24M795 455l4 26 4 14-2 5 2 8-1 10M735 454.500h92l11-3.500 17 1 5 5 14 .5 15 14.500h7l6-7 12-5 9-5 7-7-1-10-3-6-2-7M743 429.500h17.500l2-2.500 57 1 45 1.500h60M847.500 429l-2 5-6 3-6 5-8 4-7 2-5 6M819 428l9-2 6-5 8-6M825 458l6 7 8 6 4 7 7 8 5 9 2 5M889 472l-8 7-3 5-7 4-6 5-8 7-4 7-2 6-2 9M717 363l1 9 5 6 3 6 4 2 3 4-1 8 5 6 6 4 0 6 3 5 6 2 3-5 6-1 1-6 3-3 0-6 8-1 5 2 6-1 3-2 5 1 4-5 5-2 3-6 5-2 1-3 7 1 6 5 7-1 5 3 6-1 4 4"/>
<path class="lines" d="M765 326L767 334 770 340 777 341.500 783 335 787 325 786.500 317 783 306 785 297 786 287 790 281 796 278 798 273 802 266 810 265 818 269 825 275 826 282 824 292 819 297 817.500 301 821 304 826 299 832 298 835 304 836.500 317 834 325 830 328 829 334 824 339H779M769.500 341v52l-3 5 0 7-3 6M806 339.500V386M824 340L831 344 834 341 838 345 847 344 855 338 863 335 871 331 882 325 885 318 882 313 891 310 912 311 919 307 918 297 922 294 927 287 935 281 941 278M863 335.500V374.500H927M873 330v5H931L935 338 939 344 934 352 938 361 934 366 939 371M926 374.500l2 22.500h8M731 249L743 245 752 240 758 233 767 232 758 237 757 243 763 243 773 251 787 250 801 246 804 252 813 250 815 257 823 260 812 262 803 259 792 262 785 261 776 267 763 287 764 278 775 263M747 223l5-3 5-2-3 4zM794 272l4-1M796 283l1-5M800 270l4-2M806 264l5 4"/>
<path class="lines" d="M294 208l7-2-2 6 5 1-3 4 4 1-2 6 1 4-6 5-2-5 5-7 0-6-4-3M300 231l2 7 3-2-1-7M293 207l3 4 3-3M301 214l-3 2 4 3-3 3 5 2M294 234l6 5 4-7M905 384l4 7 6 4-2 5 5 1 5 6M922 378l-5 5 3 4-4 4 4 4-5 3 4 4-3 3M924 402l-6-2 3 4-5 2 6 3-4 3 6 3-4 3 5 4M936 397l-4 10-5 11-2-4 4-12M930 375l2 6 4 3 3 6M915 415l6 2 4 4-6-1M914 434l7 2 5 5M926 442l-11-4 4 8-7-1M925 421l3 13-1 9-7-2M738 531l5 2 2-3 3 3-5 3M707 538l5-3 3 4-4 2M668 540l4-2 2 4-3 3M641 563l3-1M642 567l-3-5M638 572l3-1-2 10M829 565l5-3 1 3M840 580l4 3M842 614l6-2 6 0 5-2 5-6M831 613h2M337 476l4-2M341 480l5 1M351 484l1 5M357 478l2 3"/>
<path class="route-area" d="M480 253L508 234 544 223.500 593 217.500 642 224 672 235Q679 238 681 243L695 270Q701 283 703 294L707 325Q706 348 695 349L640 355 590 361 545 395Q539 401 533 402.500L475 404Q469 404 465 402L443 391Q430 388 425 382 417 372 424 357L436 341Q437 328 440 322 452 303 462 301L461 284Q461 281 463 279 474 258 480 253ZM500 282L489 294Q488 297 489 301L490 315Q490 327 483 330L466 337Q460 343 459 353L457.500 361 473 369.500H500L528 368.500 585 327Q587 326 590 325.500L680 315.500Q680 307 678 304L671 286 663 271 638 263 593 256.500 549 262 516 271Z"/>
<path class="route" d="M693.500 322L690 297 671 255 640 244 593 237 544 244 512 253 485 271 475 288 477 313 459 320 450 334 447 350 434 368 471 386.500 531 386 587 344 630 340 693 332"/>
</svg>

<aside class="right">
<header class="dock-title"><h2>Processing Toolbox</h2><svg><use href="#float"/></svg><svg><use href="#close"/></svg></header>
<div class="dock-tools"><svg><use href="#gears"/></svg><svg><use href="#py"/></svg><svg><use href="#clock"/></svg><svg><use href="#doc"/></svg><i class="sep"></i><svg><use href="#sqedit"/></svg><i class="sep"></i><svg><use href="#spanner"/></svg></div>
<div class="search"><svg><use href="#mag"/></svg><span>buffer</span><i class="clear">×</i></div>
<div class="proc-view">
<ul class="proc">
<li><svg class="arrow"><use href="#expand"/></svg><svg class="ico"><use href="#clock"/></svg>Recently used</li>
<li><svg class="arrow"><use href="#open-tri"/></svg><svg class="ico"><use href="#q"/></svg>Vector geometry</li>
<li class="l2 picked"><svg class="ico"><use href="#buf"/></svg>Buffer</li>
<li class="l2"><svg class="ico"><use href="#gear"/></svg>Create wedge buffers</li>
<li class="l2"><svg class="ico"><use href="#gear"/></svg>Multi-ring buffer (co...</li>
<li class="l2"><svg class="ico"><use href="#gear"/></svg>Single sided buffer</li>
<li class="l2"><svg class="ico"><use href="#gear"/></svg>Tapered buffers</li>
<li class="l2"><svg class="ico"><use href="#gear"/></svg>Variable width buffe...</li>
<li><svg class="arrow"><use href="#open-tri"/></svg><svg class="ico"><use href="#gdal"/></svg>GDAL</li>
<li class="head"><svg class="arrow"><use href="#open-tri"/></svg>Vector geoprocessing</li>
<li class="l3"><svg class="ico"><use href="#gdal"/></svg>Buffer vectors</li>
<li class="l3"><svg class="ico"><use href="#gdal"/></svg>One side buffer</li>
<li><svg class="arrow"><use href="#open-tri"/></svg><svg class="ico"><use href="#grass"/></svg>GRASS</li>
<li class="head"><svg class="arrow"><use href="#open-tri"/></svg>Raster (r.*)</li>
<li class="l3"><svg class="ico"><use href="#grass"/></svg>r.buffer</li>
<li class="l3"><svg class="ico"><use href="#grass"/></svg>r.buffer.lowmem</li>
<li class="head"><svg class="arrow"><use href="#open-tri"/></svg>Vector (v.*)</li>
<li class="l3"><svg class="ico"><use href="#grass"/></svg>v.buffer</li>
<li><svg class="arrow"><use href="#open-tri"/></svg><svg class="ico"><use href="#saga"/></svg>SAGA</li>
<li class="head"><svg class="arrow"><use href="#open-tri"/></svg>Raster tools</li>
<li class="l3"><svg class="ico"><use href="#saga"/></svg>Raster buffer</li>
<li class="l3"><svg class="ico"><use href="#saga"/></svg>Raster proximity ...</li>
<li class="l3"><svg class="ico"><use href="#saga"/></svg>Threshold raster ...</li>
<li class="head"><svg class="arrow"><use href="#open-tri"/></svg>Vector general</li>
<li class="l3"><svg class="ico"><use href="#saga"/></svg>Fixed distance b...</li>
<li class="l3"><svg class="ico"><use href="#saga"/></svg>Variable distance...</li>
</ul>
<div class="vbar"><b>▲</b><i class="v-thumb"></i><b>▼</b></div>
</div>
</aside>
</main>

<footer class="status">
<div class="field locate"><svg><use href="#mag"/></svg><span>Type to locate (⌘K)</span></div>
<span class="count">12</span><label class="coord-l">Coordinate</label><div class="field coord">-9446023,4475503</div>
<svg class="mouse"><use href="#mouse"/></svg>
<label class="scale-l">Scale</label><div class="field scale"><span>1:23643126</span><b class="pick">▼</b></div>
<svg class="lock"><use href="#lock"/></svg>
<label class="mag-l">Magnifier</label><div class="field magn"><span>100%</span><b class="spin"><i>▲</i><i>▼</i></b></div>
<label class="rot-l">Rotation</label><div class="field rot"><span>0.0 °</span><b class="spin"><i>▲</i><i>▼</i></b></div>
<span class="box"><svg><use href="#check"/></svg></span><label class="render-l">Render</label>
<div class="epsg"><svg><use href="#crs"/></svg>EPSG:102100</div>
<svg class="chat"><use href="#chat"/></svg><i class="grip"></i>
</footer>
</body>
</html>
```

FILE: styles.css
```css
* { box-sizing: border-box; }
body { margin: 0; width: 1164px; height: 660px; overflow: hidden; display: flex; flex-direction: column; background: #ececec; color: #111; font: 13px/18px Inter, "Noto Sans", sans-serif; }
h1, h2, ul { margin: 0; padding: 0; font-weight: 400; }
li { list-style: none; }
i, b { font-style: normal; font-weight: 400; }
svg { display: block; flex: none; }
.defs { position: absolute; }
.icons { display: none; }

.titlebar { height: 22px; flex: none; display: flex; align-items: center; background: linear-gradient(#e6e6e6, #d0d0d0); border-bottom: 1px solid #acacac; border-radius: 5px 5px 0 0; }
.titlebar h1 { width: 1018px; text-align: center; font-size: 13px; color: #404040; line-height: 22px; padding-top: 1px; }
.lights { display: flex; gap: 8px; padding-left: 8px; width: 72px; }
.light { width: 12px; height: 12px; border-radius: 50%; }
.red-l { background: #fc5b57; border: 1px solid #e0443e; }
.yellow-l { background: #fdbc2e; border: 1px solid #dfa023; }
.green-l { background: #28c840; border: 1px solid #1aab29; }

.toolbar { height: 39px; flex: none; display: flex; align-items: center; background: linear-gradient(#f5f5f5, #e9e9e9); border-bottom: 1px solid #b4b4b4; }
.tool { width: 33px; height: 24px; padding: 0 4.5px; }
.off { opacity: .38; filter: grayscale(.7); }
.handle { width: 16px; height: 18px; flex: none; background: radial-gradient(circle, #b4b4b4 .7px, transparent 1px) 5px 0 / 3px 3px; clip-path: inset(0 4px 0 7px); }
.handle.first { width: 12px; clip-path: inset(0 3px 0 5px); }
.handle.narrow { width: 15px; }
.handle.wide { width: 17px; }
.toolbar .handle.last { margin-left: 2px; }
.pressed { width: 33px; height: 31px; display: flex; align-items: center; background: #d6d6d6; border: 1px solid #a9a9a9; border-radius: 2px; flex: none; }
.pressed .tool { margin-left: -1px; }
.cell { position: relative; }
.drop { width: 12px; flex: none; height: 10px; background: linear-gradient(#505050, #505050) center / 8px 5px no-repeat; clip-path: polygon(2px 3px, 10px 3px, 6px 8px); }
.corner { position: absolute; right: 0; bottom: -3px; transform: scale(.7); }
.sep { width: 8px; height: 20px; flex: none; background: linear-gradient(#c9c9c9, #c9c9c9) 4px 0 / 1px 100% no-repeat; }
.sep.thin { width: 6px; }
.more { width: 29px; text-align: center; padding-left: 14px; font-size: 15px; color: #333; }
.glyph-a { font: 12px "Open Sans", sans-serif; fill: #444; }
.glyph-n { font: bold 8px Roboto, sans-serif; fill: #777; }
.glyph-i { font: italic bold 14px "Liberation Serif", serif; fill: #fff; }
.glyph-s { font: italic bold 11px "Liberation Serif", serif; fill: #fff; }
.glyph-e { font: bold 29px "Liberation Serif", serif; fill: #634068; }
.glyph-es { font: bold 18px "Liberation Serif", serif; fill: #634068; }
.glyph-t { font: bold 15px "Liberation Serif", serif; fill: #4b5961; }
.glyph-l { font: bold 7.5px "DejaVu Sans", sans-serif; fill: #4b4110; }
.glyph-l.red { fill: #e01818; }
.glyph-q { font: 16px "Liberation Serif", serif; fill: #fff; }
.glyph-g { font: bold 7px "DejaVu Sans", sans-serif; fill: #000; }

.main { height: 530px; flex: none; display: flex; }
.left { width: 240px; flex: none; border-right: 1px solid #adadad; }
.map { width: 701px; height: 530px; background: #fff; border-right: 1px solid #b2b2b2; border-bottom: 1px solid #b2b2b2; }
.right { width: 223px; padding-left: 6px; flex: none; }
.dock { width: 233px; display: flex; flex-direction: column; }
.browser { height: 285px; }
.layers { height: 245px; padding-top: 6px; }
.dock-title { display: flex; align-items: center; height: 20px; flex: none; padding: 0 2px 0 4px; gap: 2px; }
.dock-title h2 { font-size: 11.2px; color: #222; flex: 1; line-height: 20px; letter-spacing: -.05px; }
.dock-title svg { width: 12px; height: 12px; }
.dock-tools { display: flex; align-items: center; height: 30px; flex: none; padding: 0 0 2px 8px; gap: 9px; }
.dock-tools svg { width: 16px; height: 16px; }
.layers .dock-tools { height: 31px; }
.layers .dock-tools .drop { margin: 0 -4px 0 -6px; }
.browser-view { flex: 1; display: grid; grid-template: 1fr 14px / 217px 14px; border: 1px solid #b4b4b4; border-left-color: #c8c8c8; background: #fff; overflow: hidden; min-height: 0; }
.tree { overflow: hidden; min-height: 0; letter-spacing: -.1px; }
.tree li { height: 18px; display: flex; align-items: center; padding-left: 2px; white-space: nowrap; overflow: hidden; }
.tree li.deep { padding-left: 42px; letter-spacing: -.13px; }
.picked { background: #dadada; }
.arrow { width: 16px; height: 16px; flex: none; }
.ico { width: 16px; height: 16px; flex: none; margin: 0 6px 0 5px; }
.tint { opacity: .65; }
.vbar { display: flex; flex-direction: column; background: #e4e4e4; border-left: 1px solid #bdbdbd; }
.vbar b, .hbar b { height: 14px; width: 13px; text-align: center; font: 7px/14px "DejaVu Sans", sans-serif; color: #444; background: #f3f3f3; flex: none; }
.vbar b { border-bottom: 1px solid #bdbdbd; }
.v-thumb { height: 70px; margin: 44px 0 auto; background: #fafafa; border: solid #c4c4c4; border-width: 1px 0; }
.hbar { display: flex; background: #e0e0e0; border-top: 1px solid #bdbdbd; }
.h-thumb { width: 121px; background: #fcfcfc; border: solid #c4c4c4; border-width: 0 1px; margin-right: auto; }
.bar-corner { border: solid #bdbdbd; border-width: 1px 0 0 1px; background: #eee; }
.layer-list { flex: 1; background: #fff; border: 1px solid #b4b4b4; font-size: 12.8px; font-weight: 700; }
.layer-list li { height: 18px; display: flex; align-items: center; padding-left: 2px; border-right: 3px solid #e4e4e4; color: #1c1c1c; }
.layer-list .active { background: #4fa031; color: #fff; text-decoration: underline; }
.layer-list .hidden-layer { color: #808080; font-style: italic; }
.box { width: 14px; height: 14px; flex: none; border: 1px solid #acacac; background: #fff; }
.box svg { width: 12px; height: 12px; }
.layer-list .box { margin: 0 6px 0 5px; }
.sym { width: 16px; height: 16px; margin-right: 6px; display: flex; align-items: center; justify-content: center; }
.line-sym { width: 16px; height: 1px; background: #4b50c8; }
.fill-sym { background: #bed050; border: 1px solid #72803a; }
.dot-sym { width: 5px; height: 5px; border-radius: 50%; background: #74ab63; border: 1px solid #4f8047; }
.name { flex: 1; padding-top: 1px; }
.chip { width: 17px; height: 16px; padding: 1px; background: #fafafa; border: 1px solid #ddd; }

.pink path { fill: #ffbfbf; stroke: #5a4a4a; stroke-width: .8; }
.red-state { fill: #f00; stroke: #301010; stroke-width: .9; }
.yellow-state { fill: #ff0; stroke: #222; stroke-width: 1; }
.lines { fill: none; stroke: #4c4c4c; stroke-width: .85; stroke-linejoin: round; }
.dark { stroke: #222200; stroke-width: 1; }
.route-area { fill: #bed050; stroke: #62692c; stroke-width: .8; fill-rule: evenodd; }
.route { fill: none; stroke: #444bb8; stroke-width: 1; }

.right .dock-title { padding: 0 2px 0 4px; }
.right .dock-tools { padding-left: 8px; }
.right .dock-tools .sep { margin: 0 -4.5px; }
.search { height: 24px; display: flex; align-items: center; background: #fff; border: 1px solid #a8a8a8; border-radius: 2px; padding: 0 7px; gap: 8px; }
.search svg { width: 13px; height: 13px; }
.search span { flex: 1; }
.clear { width: 13px; height: 10px; background: #888; color: #fff; font-size: 11px; line-height: 9px; text-align: center; clip-path: polygon(4px 0, 100% 0, 100% 100%, 4px 100%, 0 50%); padding-left: 2px; }
.proc-view { height: 455px; display: flex; border: 1px solid #b4b4b4; background: #fff; }
.proc { flex: 1; overflow: hidden; letter-spacing: -.17px; }
.proc li { height: 18px; display: flex; align-items: center; padding-left: 2px; white-space: nowrap; }
.proc .l2 { padding-left: 38px; }
.proc .l3 { padding-left: 58px; }
.proc li.head { height: 16px; padding-left: 22px; }
.proc .head .arrow { margin-right: 5px; }
.proc-view .vbar { width: 14px; background: #fafafa; }
.proc-view .v-thumb { height: 18px; margin: auto 0 0; background: #e4e4e4; }

.status { height: 30px; flex: none; display: flex; align-items: center; font-size: 11.2px; color: #222; white-space: nowrap; padding-top: 1px; }
.field { height: 23px; background: #fff; border: 1px solid #a8a8a8; border-radius: 2px; display: flex; align-items: center; flex: none; color: #111; }
.locate { width: 214px; margin-left: 4px; height: 24px; font-size: 12.8px; color: #808080; padding-left: 8px; gap: 8px; letter-spacing: -.15px; }
.locate svg { width: 13px; height: 13px; }
.count { width: 28px; padding-left: 8px; }
.coord-l { width: 61px; }
.coord { width: 129px; padding-left: 11px; }
.mouse { width: 18px; height: 18px; margin: 0 0 0 4px; }
.scale-l { width: 32px; margin-left: 11px; }
.scale { width: 93px; padding-left: 3px; }
.scale span { flex: 1; }
.pick { font: 8px/21px "DejaVu Sans", sans-serif; width: 20px; text-align: center; border-left: 1px solid #b4b4b4; background: #f4f4f4; color: #555; }
.lock { width: 16px; height: 16px; margin-left: 11px; }
.mag-l { width: 52px; margin-left: 7px; }
.magn { width: 95px; padding-left: 4px; }
.magn span, .rot span { flex: 1; }
.spin { width: 13px; border-left: 1px solid #b4b4b4; background: #f4f4f4; display: flex; flex-direction: column; height: 21px; }
.spin i { font: 6px/10px "DejaVu Sans", sans-serif; text-align: center; color: #444; }
.rot-l { width: 53px; margin-left: 9px; }
.rot { width: 91px; padding-left: 4px; }
.status .box { margin-left: 6px; }
.render-l { margin-left: 5px; width: 50px; }
.epsg { width: 105px; height: 25px; display: flex; align-items: center; gap: 2px; padding-left: 2px; background: #d6d6d6; border: 1px solid #a9a9a9; border-radius: 2px; font-size: 11px; }
.epsg svg { width: 16px; height: 16px; }
.chat { width: 18px; height: 16px; margin-left: 10px; }
.grip { width: 12px; height: 12px; margin: auto 0 0 auto; background: radial-gradient(circle, #aaa .7px, transparent 1px) 0 0 / 3px 3px; clip-path: polygon(100% 0, 100% 100%, 0 100%); }
```
